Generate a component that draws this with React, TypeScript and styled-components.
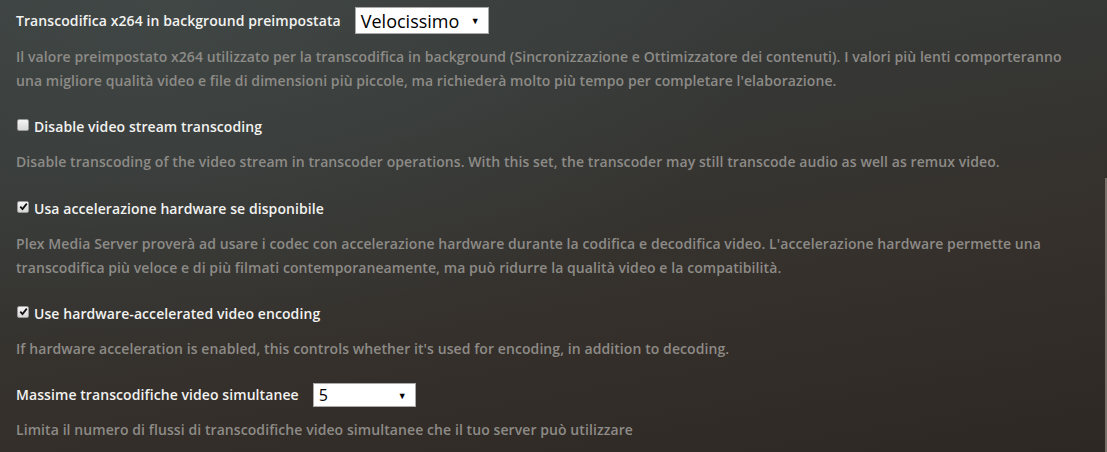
import React from "react";
import styled, { createGlobalStyle } from "styled-components";

const Global = createGlobalStyle`
  html, body { margin: 0; padding: 0; }
  body {
    width: 1107px;
    height: 452px;
    overflow: hidden;
    font-family: "Open Sans", "Liberation Sans", sans-serif;
  }
`;

const Page = styled.div`
  position: relative;
  width: 1107px;
  height: 452px;
  box-sizing: border-box;
  padding: 7px 16px 0 16px;
  background:
    radial-gradient(ellipse 900px 500px at 15% 0%, rgba(70, 78, 76, 0.55), rgba(0,0,0,0) 70%),
    linear-gradient(170deg, #3a3f3e 0%, #363836 30%, #35302b 65%, #2e2824 100%);
  display: flex;
  flex-direction: column;
  gap: 22.3px;
`;

const Setting = styled.div`
  display: flex;
  flex-direction: column;
  gap: 11px;
`;

const LabelRow = styled.label`
  display: flex;
  align-items: center;
  min-height: 24px;
  gap: 14px;
  color: #f2f2f0;
  font-size: 14px;
  font-weight: 600;
  letter-spacing: 0.08px;
  line-height: 24px;
`;

const CheckRow = styled.label`
  display: flex;
  align-items: center;
  gap: 5px;
  color: #f2f2f0;
  font-size: 14px;
  font-weight: 600;
  letter-spacing: 0.08px;
  line-height: 24px;
  padding-left: 1px;
`;

const Box = styled.span<{ $checked: boolean }>`
  width: 12px;
  height: 12px;
  box-sizing: border-box;
  border-radius: 2px;
  background: linear-gradient(#f4f4f4, #d8d8d8);
  border: 1px solid #9a9a9a;
  display: inline-flex;
  align-items: center;
  justify-content: center;
  margin-top: -4px;
`;

const Select = styled.div<{ $w: number; $h: number; $size: number }>`
  width: ${(p) => p.$w}px;
  height: ${(p) => p.$h}px;
  box-sizing: border-box;
  background: #ffffff;
  border: 1px solid #a9a9a9;
  display: flex;
  align-items: center;
  justify-content: space-between;
  padding: 0 8px 0 5px;
  color: #000;
  font-family: "Open Sans", "Liberation Sans", sans-serif;
  font-weight: 400;
  letter-spacing: 0;
  font-size: ${(p) => p.$size}px;
`;

const Arrow = styled.span`
  font-size: 9px;
  color: #000;
  line-height: 1;
`;

const Desc = styled.p`
  margin: 0;
  color: #8d8b87;
  font-size: 14px;
  font-weight: 600;
  letter-spacing: 0.08px;
  line-height: 24px;
  max-width: 1065px;
`;

const Scroll = styled.div`
  position: absolute;
  right: 0;
  top: 178px;
  bottom: 0;
  width: 2px;
  background: #77706b;
`;

function Check({ checked }: { checked: boolean }) {
  return (
    <Box $checked={checked}>
      {checked && (
        <svg width="9" height="9" viewBox="0 0 9 9">
          <path d="M1.3 4.6 L3.5 7 L7.8 1.6" fill="none" stroke="#111" strokeWidth="1.8" />
        </svg>
      )}
    </Box>
  );
}

export default function App() {
  return (
    <>
      <Global />
      <Page>
        <Setting>
          <LabelRow>
            Transcodifica x264 in background preimpostata
            <Select $w={134} $h={27} $size={18}>
              Velocissimo <Arrow>▼</Arrow>
            </Select>
          </LabelRow>
          <Desc>
            Il valore preimpostato x264 utilizzato per la transcodifica in background (Sincronizzazione e Ottimizzatore dei contenuti). I valori più lenti comporteranno una migliore qualità video e file di dimensioni più piccole, ma richiederà molto più tempo per completare l'elaborazione.
          </Desc>
        </Setting>
        <Setting>
          <CheckRow>
            <Check checked={false} />
            Disable video stream transcoding
          </CheckRow>
          <Desc>
            Disable transcoding of the video stream in transcoder operations. With this set, the transcoder may still transcode audio as well as remux video.
          </Desc>
        </Setting>
        <Setting>
          <CheckRow>
            <Check checked={true} />
            Usa accelerazione hardware se disponibile
          </CheckRow>
          <Desc>
            Plex Media Server proverà ad usare i codec con accelerazione hardware durante la codifica e decodifica video. L'accelerazione hardware permette una transcodifica più veloce e di più filmati contemporaneamente, ma può ridurre la qualità video e la compatibilità.
          </Desc>
        </Setting>
        <Setting>
          <CheckRow>
            <Check checked={true} />
            Use hardware-accelerated video encoding
          </CheckRow>
          <Desc>
            If hardware acceleration is enabled, this controls whether it's used for encoding, in addition to decoding.
          </Desc>
        </Setting>
        <Setting>
          <LabelRow>
            Massime transcodifiche video simultanee
            <Select $w={103} $h={24} $size={16}>
              5 <Arrow>▼</Arrow>
            </Select>
          </LabelRow>
          <Desc>
            Limita il numero di flussi di transcodifiche video simultanee che il tuo server può utilizzare
          </Desc>
        </Setting>
        <Scroll />
      </Page>
    </>
  );
}
